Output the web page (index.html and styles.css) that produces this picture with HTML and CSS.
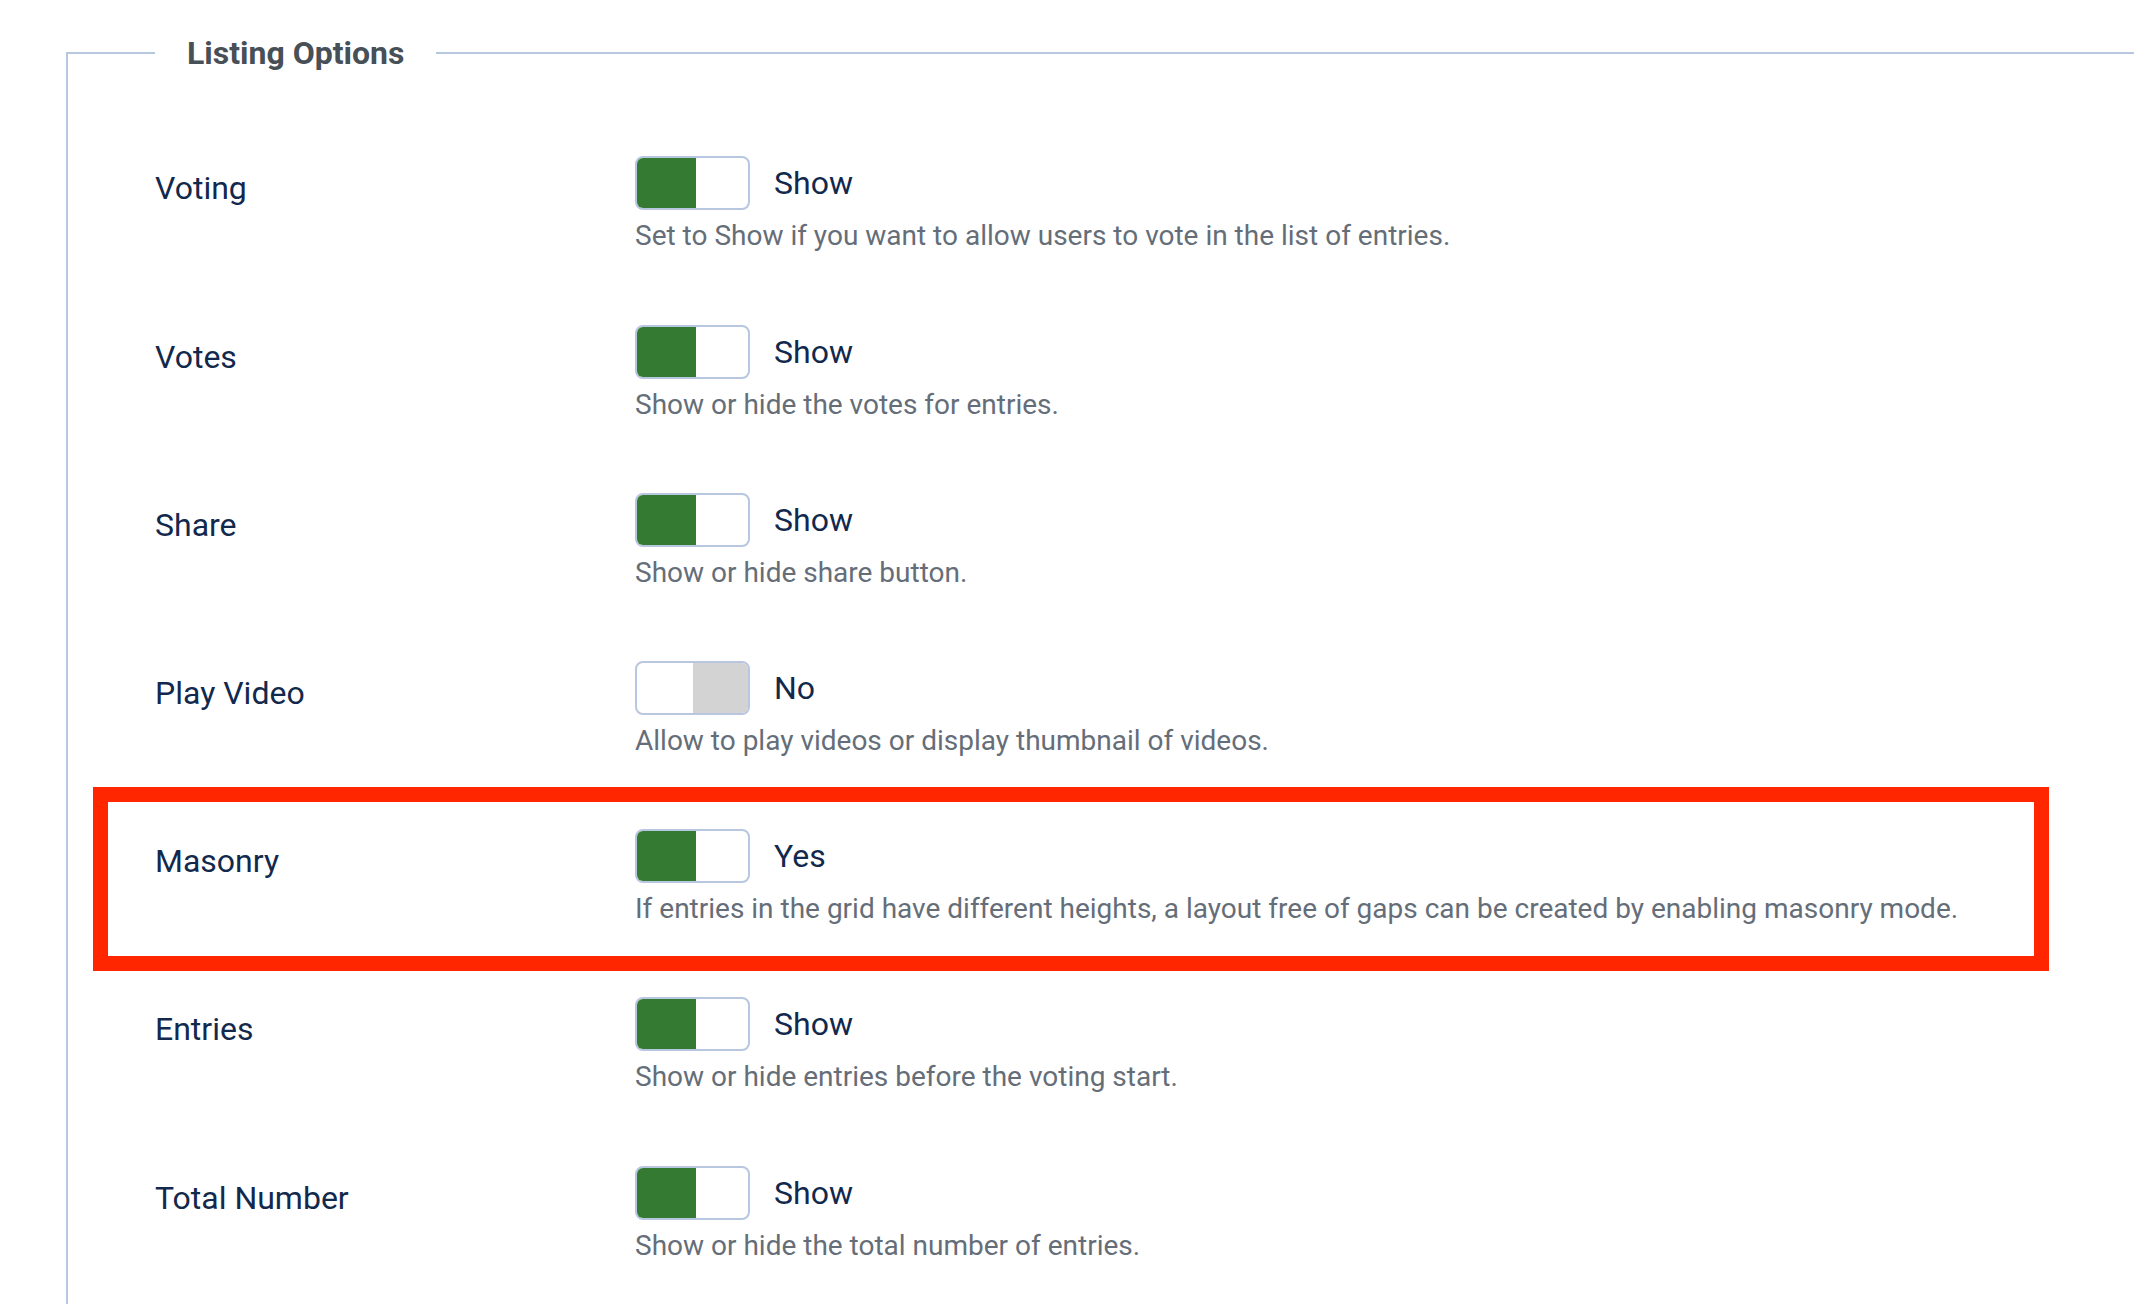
FILE: index.html
```html
<!DOCTYPE html>
<html lang="en">
<head>
  <meta charset="UTF-8" />
  <meta name="viewport" content="width=device-width, initial-scale=1.0"/>
  <title>Listing Options</title>
  <link rel="stylesheet" href="styles.css">
</head>
<body>

  <fieldset class="options">
    <legend>Listing Options</legend>

    <div class="row">
      <div class="label">Voting</div>
      <div class="control">
        <div class="switch-line">
          <div class="switch on"><span></span><span></span></div>
          <span class="value">Show</span>
        </div>
        <div class="desc">Set to Show if you want to allow users to vote in the list of entries.</div>
      </div>
    </div>

    <div class="row">
      <div class="label">Votes</div>
      <div class="control">
        <div class="switch-line">
          <div class="switch on"><span></span><span></span></div>
          <span class="value">Show</span>
        </div>
        <div class="desc">Show or hide the votes for entries.</div>
      </div>
    </div>

    <div class="row">
      <div class="label">Share</div>
      <div class="control">
        <div class="switch-line">
          <div class="switch on"><span></span><span></span></div>
          <span class="value">Show</span>
        </div>
        <div class="desc">Show or hide share button.</div>
      </div>
    </div>

    <div class="row">
      <div class="label">Play Video</div>
      <div class="control">
        <div class="switch-line">
          <div class="switch off"><span></span><span></span></div>
          <span class="value">No</span>
        </div>
        <div class="desc">Allow to play videos or display thumbnail of videos.</div>
      </div>
    </div>

    <div class="row highlight">
      <div class="label">Masonry</div>
      <div class="control">
        <div class="switch-line">
          <div class="switch on"><span></span><span></span></div>
          <span class="value">Yes</span>
        </div>
        <div class="desc">If entries in the grid have different heights, a layout free of gaps can be created by enabling masonry mode.</div>
      </div>
    </div>

    <div class="row">
      <div class="label">Entries</div>
      <div class="control">
        <div class="switch-line">
          <div class="switch on"><span></span><span></span></div>
          <span class="value">Show</span>
        </div>
        <div class="desc">Show or hide entries before the voting start.</div>
      </div>
    </div>

    <div class="row">
      <div class="label">Total Number</div>
      <div class="control">
        <div class="switch-line">
          <div class="switch on"><span></span><span></span></div>
          <span class="value">Show</span>
        </div>
        <div class="desc">Show or hide the total number of entries.</div>
      </div>
    </div>
  </fieldset>

</body>
</html>
```

FILE: styles.css
```css
html, body {
  overflow: hidden;
}

body {
  margin: 0;
  background: #fff;
  font-family: Roboto, "Liberation Sans", Arial, sans-serif;
}

.options {
  margin: 34px 0 0 66px;
  padding: 42px 0 60px 87px;
  border: none;
  border-top: 2px solid #b8c7e0;
  border-left: 2px solid #b8c7e0;
}

.options legend {
  padding: 0 32px;
  font-size: 32px;
  font-weight: 700;
  line-height: 1.2;
  color: #474f57;
}

.row {
  position: relative;
  display: grid;
  grid-template-columns: 480px 1fr;
  padding: 42px 0 25.2px;
}

.label {
  padding-top: 8px;
  font-size: 32px;
  line-height: 1.5;
  color: #12294d;
}

.switch-line {
  display: flex;
  align-items: center;
  gap: 24px;
}

.switch {
  display: flex;
  width: 115px;
  height: 54px;
  box-sizing: border-box;
  border: 2px solid #b8c7e0;
  border-radius: 8px;
  overflow: hidden;
}

.switch span {
  flex: 1;
}

.switch.on span:first-child {
  flex: 0 0 59px;
  background: #347a33;
}

.switch.off span:last-child {
  flex: 0 0 55px;
  background: #d3d3d3;
}

.value {
  font-size: 32px;
  line-height: 1.5;
  color: #12294d;
}

.desc {
  margin-top: 5px;
  font-size: 28px;
  line-height: 1.5;
  color: #656e78;
}

.highlight::after {
  content: "";
  position: absolute;
  left: -62px;
  right: 85px;
  top: 0;
  bottom: -16px;
  border: 15px solid #ff2600;
  pointer-events: none;
}
```
